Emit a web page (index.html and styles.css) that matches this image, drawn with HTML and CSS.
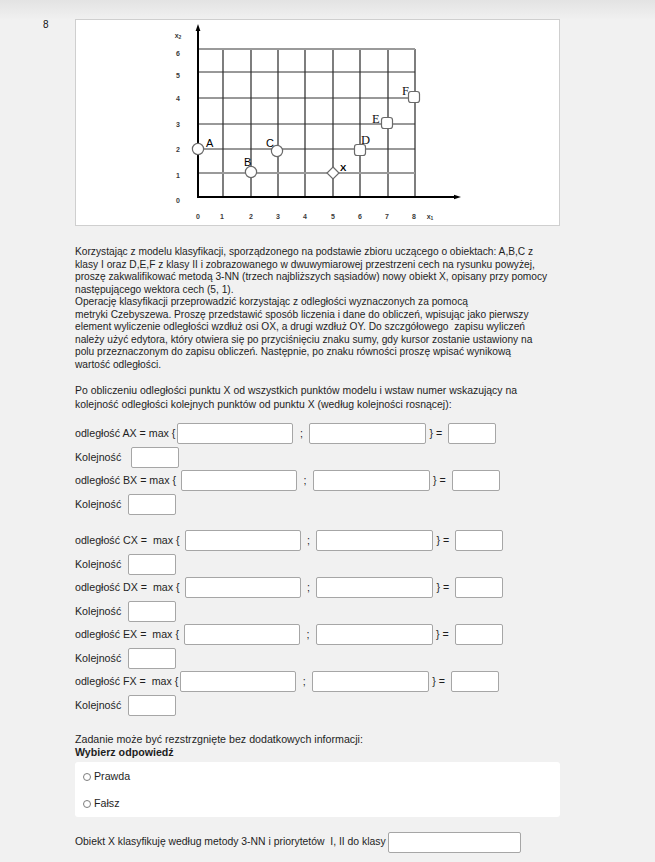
FILE: index.html
```html
<!DOCTYPE html>
<html lang="pl">
<head>
<meta charset="utf-8">
<title>Pytanie 8</title>
<link rel="stylesheet" href="styles.css">
</head>
<body>
<div class="page">
  <div class="qnum">8</div>
  <div class="content">
    <div class="figure">
      <svg class="chart" width="482" height="205" viewBox="0 0 482 205">
        <g class="grid-v">
          <line x1="147" y1="29" x2="147" y2="177"/>
          <line x1="175" y1="29" x2="175" y2="177"/>
          <line x1="202" y1="29" x2="202" y2="177"/>
          <line x1="229" y1="29" x2="229" y2="177"/>
          <line x1="257" y1="29" x2="257" y2="177"/>
          <line x1="284" y1="29" x2="284" y2="177"/>
          <line x1="312" y1="29" x2="312" y2="177"/>
          <line x1="339" y1="29" x2="339" y2="177"/>
        </g>
        <g class="grid-h">
          <line x1="122" y1="52" x2="339" y2="52"/>
          <line x1="122" y1="78" x2="339" y2="78"/>
          <line x1="122" y1="104" x2="339" y2="104"/>
          <line x1="122" y1="129" x2="339" y2="129"/>
        </g>
        <g class="grid-light">
          <line x1="122" y1="29" x2="339" y2="29"/>
          <line x1="122" y1="153" x2="339" y2="153"/>
        </g>
        <g class="axis">
          <line x1="122" y1="9" x2="122" y2="178"/>
          <line x1="121" y1="177" x2="380" y2="177"/>
        </g>
        <polygon class="arrow" points="122,4 119.6,11 124.4,11"/>
        <polygon class="arrow" points="385,177 378,174.8 378,179.2"/>
        <g class="tick">
          <text x="102" y="18">x<tspan class="sub" dy="1">2</tspan></text>
          <text x="102" y="36">6</text>
          <text x="102" y="58">5</text>
          <text x="102" y="81">4</text>
          <text x="102" y="107">3</text>
          <text x="102" y="132">2</text>
          <text x="102" y="158">1</text>
          <text x="102" y="183">0</text>
          <text x="122" y="199">0</text>
          <text x="146" y="199">1</text>
          <text x="175" y="199">2</text>
          <text x="202" y="199">3</text>
          <text x="229" y="199">4</text>
          <text x="257" y="199">5</text>
          <text x="284" y="199">6</text>
          <text x="311" y="199">7</text>
          <text x="338" y="199">8</text>
          <text x="354" y="199">x<tspan class="sub" dy="1">1</tspan></text>
        </g>
        <g class="pt">
          <circle cx="122" cy="129" r="5.6"/>
          <circle cx="175" cy="152" r="5.6"/>
          <circle cx="201" cy="131" r="5.6"/>
          <rect x="278.5" y="124.5" width="11" height="11" rx="2.5"/>
          <rect x="305.5" y="97.5" width="11" height="11" rx="2.5"/>
          <rect x="332.5" y="71.5" width="11" height="11" rx="2.5"/>
          <polygon class="diamond" points="257,147 263,153 257,159 251,153"/>
        </g>
        <g class="lbl-sans">
          <text x="130" y="127">A</text>
          <text x="168" y="146">B</text>
          <text x="190" y="127">C</text>
        </g>
        <g class="lbl-serif">
          <text x="285" y="124">D</text>
          <text x="296" y="103">E</text>
          <text x="326" y="75">F</text>
        </g>
        <text class="lbl-x" x="264" y="151">X</text>
      </svg>
    </div>

    <p class="intro">Korzystając z modelu klasyfikacji, sporządzonego na podstawie zbioru uczącego o obiektach: A,B,C z<br>klasy I oraz D,E,F z klasy II i zobrazowanego w dwuwymiarowej przestrzeni cech na rysunku powyżej,<br>proszę zakwalifikować metodą 3-NN (trzech najbliższych sąsiadów) nowy obiekt X, opisany przy pomocy<br>następującego wektora cech (5, 1).</p>
    <p class="intro">Operację klasyfikacji przeprowadzić korzystając z odległości wyznaczonych za pomocą<br>metryki Czebyszewa. Proszę przedstawić sposób liczenia i dane do obliczeń, wpisując jako pierwszy<br>element wyliczenie odległości wzdłuż osi OX, a drugi wzdłuż OY. Do szczgółowego&nbsp; zapisu wyliczeń<br>należy użyć edytora, który otwiera się po przyciśnięciu znaku sumy, gdy kursor zostanie ustawiony na<br>polu przeznaczonym do zapisu obliczeń. Następnie, po znaku równości proszę wpisać wynikową<br>wartość odległości.</p>
    <p class="task">Po obliczeniu odległości punktu X od wszystkich punktów modelu i wstaw numer wskazujący na<br>kolejność odległości kolejnych punktów od punktu X (według kolejności rosnącej):</p>

    <div class="calc">
      <div class="row"><span class="lab">odległość AX = max {</span><input class="box long1" type="text"><span class="sep">;</span><input class="box long2" type="text"><span class="close">}&nbsp;=</span><input class="box short" type="text"></div>
      <div class="row"><span class="lab">Kolejność&nbsp;&nbsp;</span><input class="box ord" type="text"></div>
      <div class="row"><span class="lab">odległość BX = max {&nbsp;</span><input class="box long1" type="text"><span class="sep">;</span><input class="box long2" type="text"><span class="close">}&nbsp;=</span><input class="box short" type="text"></div>
      <div class="row"><span class="lab">Kolejność&nbsp;</span><input class="box ord" type="text"></div>
    </div>

    <div class="calc calc2">
      <div class="row"><span class="lab">odległość CX =&nbsp; max {&nbsp;</span><input class="box long1" type="text"><span class="sep">;</span><input class="box long2" type="text"><span class="close">}&nbsp;=</span><input class="box short" type="text"></div>
      <div class="row"><span class="lab">Kolejność&nbsp;</span><input class="box ord" type="text"></div>
      <div class="row"><span class="lab">odległość DX =&nbsp; max {&nbsp;</span><input class="box long1" type="text"><span class="sep">;</span><input class="box long2" type="text"><span class="close">}&nbsp;=</span><input class="box short" type="text"></div>
      <div class="row"><span class="lab">Kolejność&nbsp;</span><input class="box ord" type="text"></div>
      <div class="row"><span class="lab">odległość EX =&nbsp; max {&nbsp;</span><input class="box long1" type="text"><span class="sep">;</span><input class="box long2" type="text"><span class="close">}&nbsp;=</span><input class="box short" type="text"></div>
      <div class="row"><span class="lab">Kolejność&nbsp;</span><input class="box ord" type="text"></div>
      <div class="row"><span class="lab">odległość FX =&nbsp; max {</span><input class="box long1" type="text"><span class="sep">;</span><input class="box long2" type="text"><span class="close">}&nbsp;=</span><input class="box short" type="text"></div>
      <div class="row"><span class="lab">Kolejność&nbsp;</span><input class="box ord" type="text"></div>
    </div>

    <p class="tf-q">Zadanie może być rezstrzgnięte bez dodatkowych informacji:</p>
    <p class="choose">Wybierz odpowiedź</p>
    <div class="answers">
      <label class="opt"><span class="radio"></span>Prawda</label>
      <label class="opt"><span class="radio"></span>Fałsz</label>
    </div>

    <div class="final"><span class="lab">Obiekt X klasyfikuję według metody 3-NN i priorytetów&nbsp; I, II do klasy</span><input class="box cls" type="text"></div>
  </div>
</div>
</body>
</html>
```

FILE: styles.css
```css
html, body {
  margin: 0;
  padding: 0;
}

body {
  background-color: #f1f1f1;
  background-image: linear-gradient(to bottom, #e3e3e3 0px, #f1f1f1 20px);
  background-repeat: no-repeat;
  background-size: 100% 20px;
  font-family: "Liberation Sans", Arial, sans-serif;
  color: #1e1e1e;
  min-height: 862px;
}

.page {
  display: flex;
  padding-top: 19px;
}

.qnum {
  width: 75px;
  box-sizing: border-box;
  padding-left: 43px;
  font-size: 10px;
  line-height: 12px;
  color: #111;
}

.content {
  width: 485px;
  font-size: 10.67px;
  line-height: 12.6px;
}

.figure {
  height: 207px;
  box-sizing: border-box;
  border: 1px solid #cfcfcf;
  background: #fff;
}

.chart {
  display: block;
}

.grid-v line {
  stroke: #474747;
  stroke-width: 1.4;
}

.grid-h line {
  stroke: #333;
  stroke-width: 1;
}

.grid-light line {
  stroke: #9a9a9a;
  stroke-width: 2;
}

.axis line {
  stroke: #000;
  stroke-width: 2;
}

.arrow {
  fill: #000;
}

.tick text {
  font-family: "Liberation Sans", Arial, sans-serif;
  font-size: 7px;
  font-weight: bold;
  fill: #3a3a3a;
  text-anchor: middle;
}

.tick .sub {
  font-size: 5px;
}

.pt circle,
.pt rect,
.pt polygon {
  fill: #fff;
  stroke: #6a6a6a;
  stroke-width: 1.2;
}

.lbl-sans text {
  font-family: "Liberation Sans", Arial, sans-serif;
  font-size: 11px;
  fill: #000;
}

.lbl-serif text {
  font-family: "Liberation Serif", "Times New Roman", serif;
  font-size: 12.5px;
  fill: #111;
}

.lbl-x {
  font-family: "Liberation Sans", Arial, sans-serif;
  font-size: 9.5px;
  font-weight: bold;
  fill: #000;
}

p {
  margin: 0;
}

.intro {
  font-size: 10.2px;
  line-height: 12.5px;
  white-space: nowrap;
}

.intro:first-of-type {
  margin-top: 20px;
}

.task {
  margin-top: 13px;
  font-size: 10.45px;
  line-height: 14px;
  white-space: nowrap;
}

.calc {
  margin-top: 10px;
}

.calc2 {
  margin-top: 13px;
}

.row {
  display: flex;
  align-items: center;
  height: 23.5px;
  white-space: nowrap;
}

.lab {
  white-space: nowrap;
}

.box {
  display: block;
  box-sizing: border-box;
  height: 21px;
  margin: 0;
  padding: 0 3px;
  border: 1px solid #a6a6a6;
  border-radius: 2px;
  background: #fff;
  font: inherit;
  outline: none;
}

.long1 {
  width: 116px;
  margin-left: 2px;
}

.long2 {
  width: 117px;
}

.short {
  width: 48px;
}

.ord {
  width: 48px;
  margin-left: 4px;
}

.sep {
  padding: 0 6.5px;
}

.close {
  margin: 0 6px 0 3px;
}

.tf-q {
  margin-top: 16px;
}

.answers {
  margin-top: 4px;
  padding-top: 1px;
  background: #fff;
  border-radius: 3px;
}

.opt {
  display: flex;
  align-items: center;
  height: 27px;
  padding-left: 8px;
}

.radio {
  width: 6px;
  height: 6px;
  border: 1px solid #7d7d7d;
  border-radius: 50%;
  background: #fff;
  margin-right: 3px;
}

.choose {
  font-weight: bold;
}

.final {
  display: flex;
  align-items: center;
  margin-top: 15px;
  height: 21px;
  font-size: 10.4px;
}

.cls {
  width: 133px;
  margin-left: 2px;
}
```
